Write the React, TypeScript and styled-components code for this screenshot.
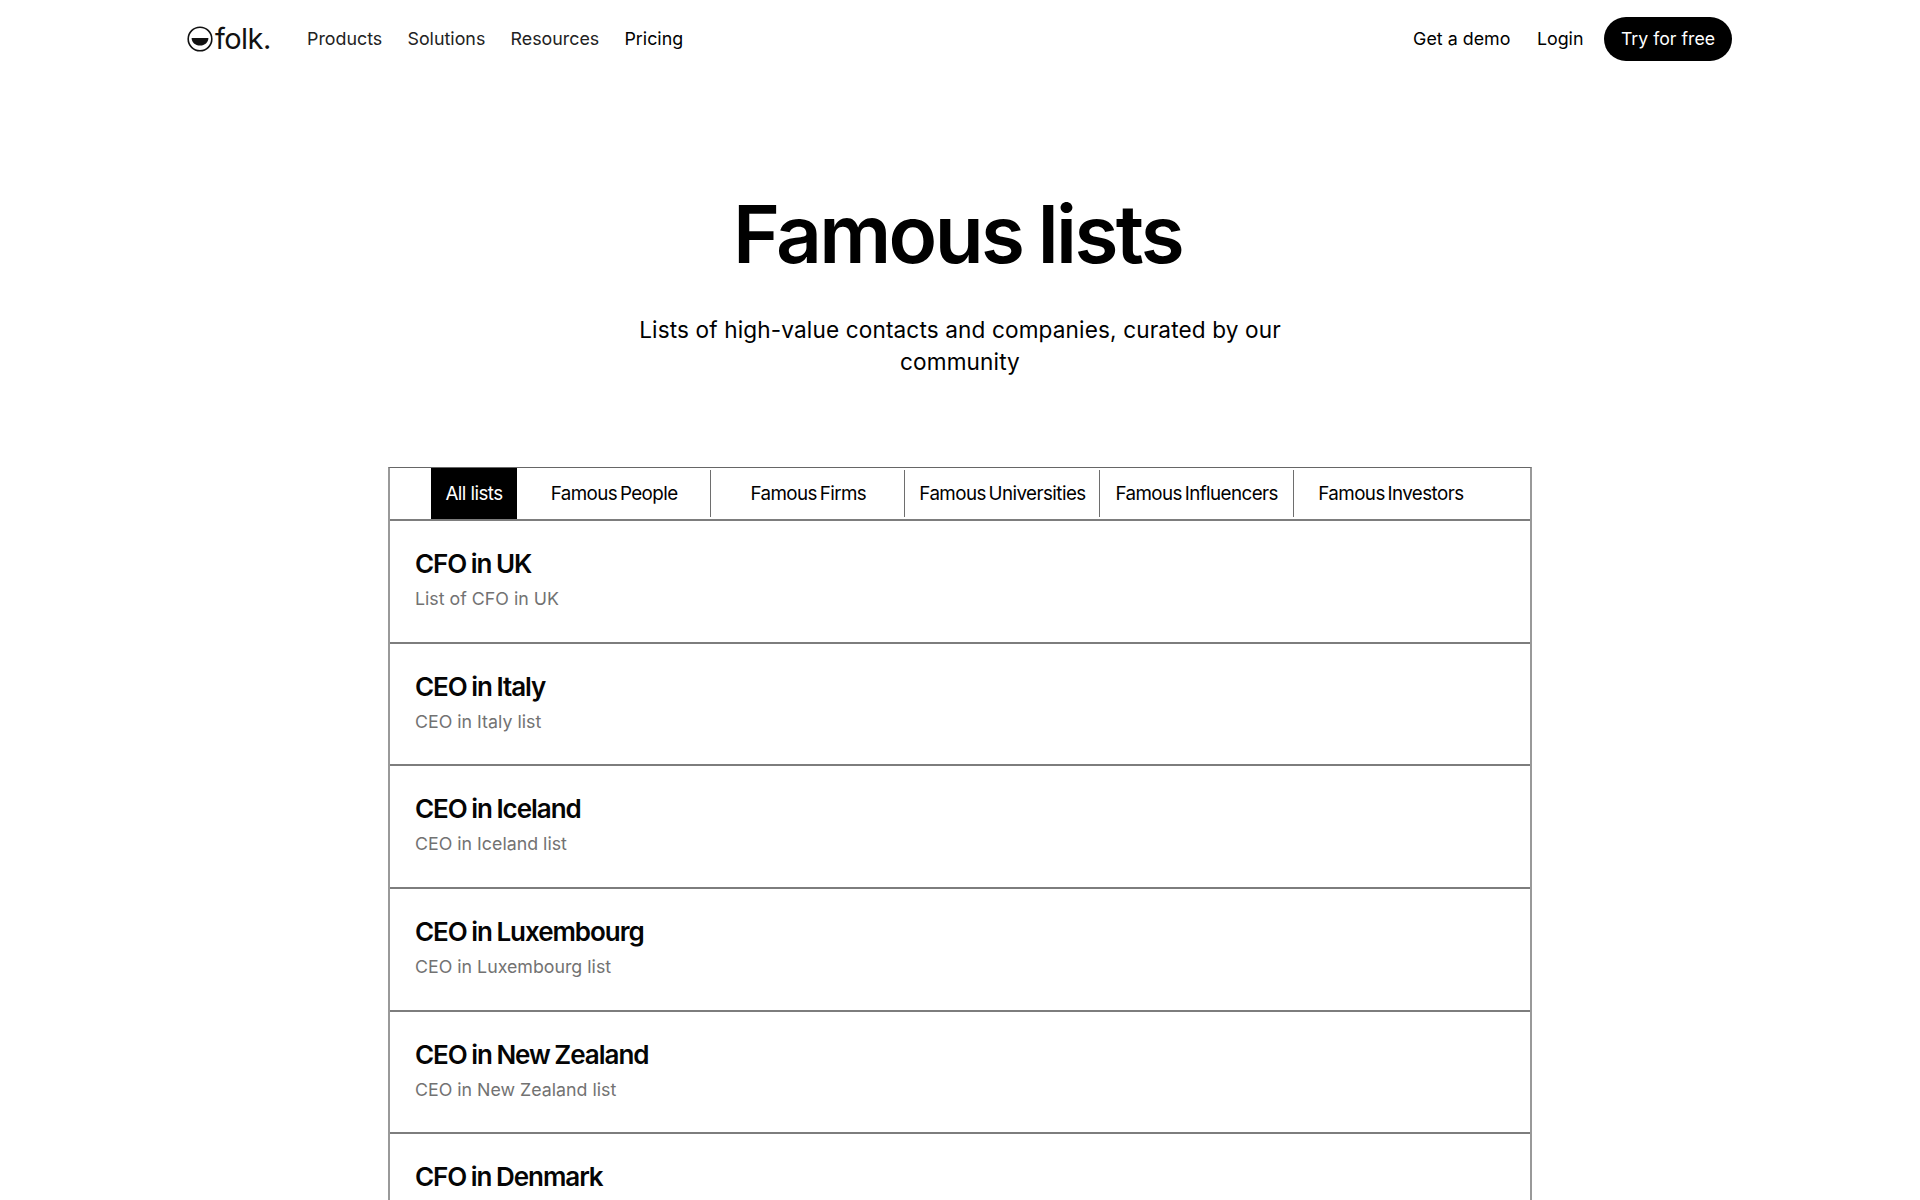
import React from "react";
import styled, { createGlobalStyle } from "styled-components";

const Global = createGlobalStyle`
  html, body { margin: 0; padding: 0; background: #fff; }
  body { font-family: Inter, "Liberation Sans", sans-serif; color: #000; overflow: hidden; height: 1200px; }
  * { box-sizing: border-box; }
`;

const Page = styled.div`
  height: 1200px;
  overflow: hidden;
`;

const Header = styled.header`
  display: flex;
  align-items: center;
  justify-content: space-between;
  height: 77px;
  padding: 0 188px 0 187px;
`;

const Left = styled.div`
  display: flex;
  align-items: center;
`;

const Logo = styled.a`
  display: flex;
  align-items: center;
  gap: 2px;
  width: 120px;
  color: #111;
`;

const LogoWord = styled.span`
  font-size: 29px;
  font-weight: 370;
  letter-spacing: -0.02em;
  line-height: 30px;
`;

const NavLinks = styled.nav`
  display: flex;
  gap: 25.2px;
`;

const NavLink = styled.a<{ $dark?: boolean }>`
  font-size: 17.85px;
  line-height: 24px;
  color: ${(p) => (p.$dark ? "#000" : "#222")};
`;

const Right = styled.div`
  display: flex;
  align-items: center;
  gap: 26.5px;
`;

const Cta = styled.a`
  display: flex;
  align-items: center;
  justify-content: center;
  margin-left: -6px;
  width: 128px;
  height: 44px;
  border-radius: 22px;
  background: #000;
  color: #fff;
  font-size: 17.7px;
`;

const Hero = styled.section`
  display: flex;
  flex-direction: column;
  align-items: center;
  padding-top: 113px;
`;

const Title = styled.h1`
  margin: 0 5px 0 0;
  font-size: 80px;
  line-height: 88px;
  font-weight: 600;
  letter-spacing: -0.033em;
  word-spacing: -2px;
`;

const Subtitle = styled.p`
  margin: 36px 0 0;
  width: 650px;
  text-align: center;
  font-size: 22.6px;
  line-height: 32px;
  letter-spacing: 0.13px;
`;

const Table = styled.section`
  margin: 89px auto 0;
  width: 1144px;
  border-top: 1px solid #666;
  border-left: 2px solid #999;
  border-right: 2px solid #999;
`;

const Tabs = styled.div`
  display: flex;
  justify-content: center;
  height: 51px;
  padding-right: 1px;
`;

const Tab = styled.a<{ $active?: boolean; $first?: boolean }>`
  display: flex;
  align-items: center;
  justify-content: center;
  width: ${(p) => (p.$first ? "86px" : "194.2px")};
  font-size: 18.8px;
  letter-spacing: -0.03em;
  word-spacing: ${(p) => (p.$first ? "0" : "-2px")};
  font-weight: 400;
  background: ${(p) => (p.$active ? "#000" : "#fff")};
  color: ${(p) => (p.$active ? "#fff" : "#000")};
  position: relative;
  &::after {
    content: ${(p) => (p.$first ? "none" : '""')};
    position: absolute;
    top: 2px;
    bottom: 2px;
    right: 0;
    width: 1px;
    background: #6e6e6e;
  }
  &:last-child::after { content: none; }
`;

const Row = styled.a`
  display: flex;
  flex-direction: column;
  height: 122.7px;
  padding: 25px 25px 0;
  border-top: 2px solid #7d7d7d;
`;

const RowTitle = styled.h3`
  margin: 0;
  font-size: 26px;
  line-height: 36px;
  font-weight: 570;
  letter-spacing: -0.04em;
  word-spacing: -1px;
  color: #050505;
`;

const RowText = styled.p`
  margin: 4px 0 0;
  font-size: 17.8px;
  line-height: 26px;
  color: #727272;
`;

const tabs = ["Famous People", "Famous Firms", "Famous Universities", "Famous Influencers", "Famous Investors"];
const rows: [string, string?][] = [
  ["CFO in UK", "List of CFO in UK"],
  ["CEO in Italy", "CEO in Italy list"],
  ["CEO in Iceland", "CEO in Iceland list"],
  ["CEO in Luxembourg", "CEO in Luxembourg list"],
  ["CEO in New Zealand", "CEO in New Zealand list"],
  ["CFO in Denmark"],
];

export default function App() {
  return (
    <Page>
      <Global />
      <Header>
        <Left>
          <Logo>
            <svg width="26" height="26" viewBox="0 0 26 26" fill="none">
              <circle cx="13" cy="13" r="11.8" stroke="#111" strokeWidth="1.6" />
              <path d="M4.6 12h16.8c0 4.4-3.6 7.6-8.4 7.6S4.6 16.4 4.6 12z" fill="#111" />
            </svg>
            <LogoWord>folk.</LogoWord>
          </Logo>
          <NavLinks>
            <NavLink>Products</NavLink>
            <NavLink>Solutions</NavLink>
            <NavLink>Resources</NavLink>
            <NavLink $dark>Pricing</NavLink>
          </NavLinks>
        </Left>
        <Right>
          <NavLink $dark>Get a demo</NavLink>
          <NavLink $dark>Login</NavLink>
          <Cta>Try for free</Cta>
        </Right>
      </Header>
      <Hero>
        <Title>Famous lists</Title>
        <Subtitle>Lists of high-value contacts and companies, curated by our community</Subtitle>
      </Hero>
      <Table>
        <Tabs>
          <Tab $active $first>All lists</Tab>
          {tabs.map((t) => (
            <Tab key={t}>{t}</Tab>
          ))}
        </Tabs>
        {rows.map(([a, b]) => (
          <Row key={a}>
            <RowTitle>{a}</RowTitle>
            {b && <RowText>{b}</RowText>}
          </Row>
        ))}
      </Table>
    </Page>
  );
}
